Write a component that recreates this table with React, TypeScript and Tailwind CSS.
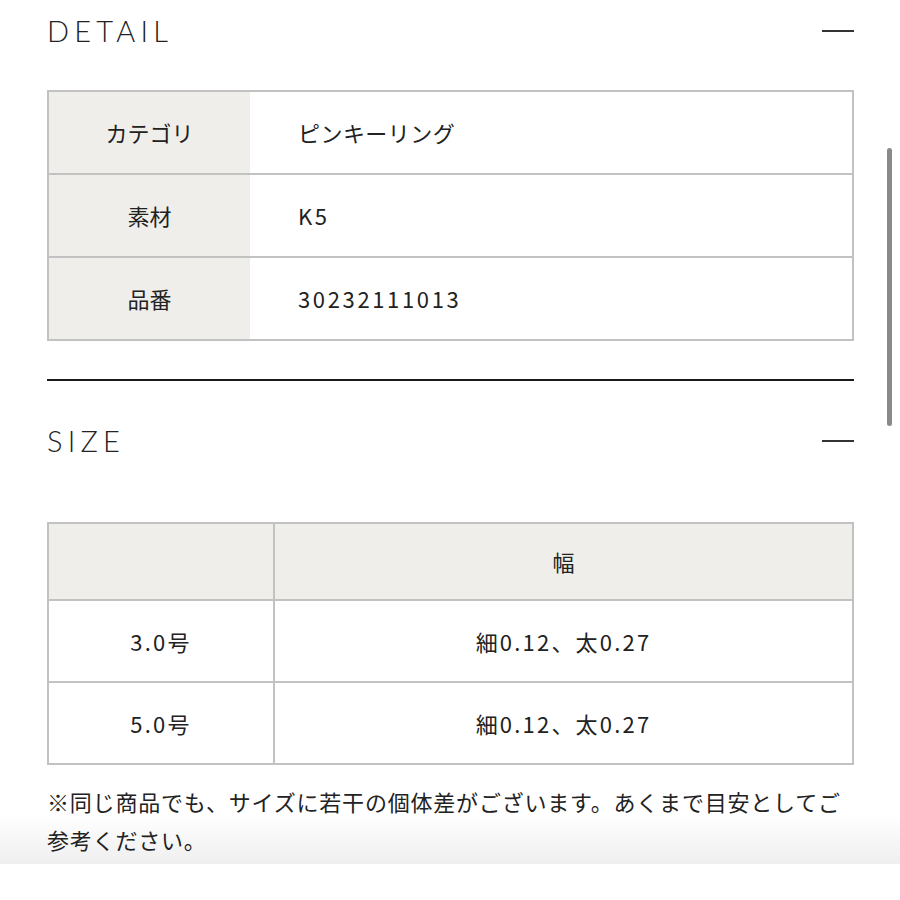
import React from "react";

const jp = "font-['Noto_Sans_CJK_JP',sans-serif]";

const SectionHead = ({ title }: { title: string }) => (
  <div className="flex items-center justify-between">
    <h2 className="font-['Lato',sans-serif] font-light text-[29px] leading-none tracking-[0.18em] text-[#222]">
      {title}
    </h2>
    <span className="block w-[32px] h-[2px] bg-[#333]" />
  </div>
);

const detailRows = [
  { label: "カテゴリ", value: "ピンキーリング", num: false },
  { label: "素材", value: "K5", num: true },
  { label: "品番", value: "30232111013", num: true },
];

const sizeRows = [
  { size: "3.0号", width: "細0.12、太0.27" },
  { size: "5.0号", width: "細0.12、太0.27" },
];

export default function App() {
  return (
    <div className={`relative min-h-[900px] bg-white overflow-hidden text-[#222] ${jp}`}>
      <div className="pl-[47px] pr-[46px] pt-[16px]">
        <SectionHead title="DETAIL" />

        <table className="mt-[45px] w-full border-collapse border-2 border-[#c2c2c2] text-[22px]">
          <tbody>
            {detailRows.map((r) => (
              <tr key={r.label} className="h-[83px] border-b-2 border-[#c2c2c2]">
                <td className="w-[202px] bg-[#efeeeb] text-center align-middle">{r.label}</td>
                <td
                  className={`pl-[48px] align-middle ${r.num ? "tracking-[0.12em]" : "tracking-[0.02em]"}`}
                >
                  {r.value}
                </td>
              </tr>
            ))}
          </tbody>
        </table>

        <div className="mt-[38px] h-[2px] bg-[#1a1a1a]" />

        <div className="mt-[45px]">
          <SectionHead title="SIZE" />
        </div>

        <table className="mt-[67px] w-full border-collapse border-2 border-[#c2c2c2] text-[22px]">
          <thead>
            <tr className="h-[77px] bg-[#efeeeb] border-b-2 border-[#c2c2c2]">
              <th className="w-[226px] border-r-2 border-[#c2c2c2] font-normal" />
              <th className="font-normal text-center">幅</th>
            </tr>
          </thead>
          <tbody>
            {sizeRows.map((r) => (
              <tr key={r.size} className="h-[82px] border-b-2 border-[#c2c2c2]">
                <td className="border-r-2 border-[#c2c2c2] text-center tracking-[0.1em]">{r.size}</td>
                <td className="text-center tracking-[0.1em]">{r.width}</td>
              </tr>
            ))}
          </tbody>
        </table>

        <p className="relative z-10 mt-[17px] text-[22px] leading-[38px] tracking-[0.8px]">
          ※同じ商品でも、サイズに若干の個体差がございます。あくまで目安としてご参考ください。
        </p>
      </div>

      {/* bottom fade */}
      <div className="pointer-events-none absolute left-0 right-0 top-[815px] h-[49px] bg-gradient-to-b from-white to-[#efefef]" />

      {/* scrollbar */}
      <div className="absolute left-[887px] top-[148px] w-[5px] h-[278px] rounded-full bg-[#8a8a8a]" />
    </div>
  );
}
